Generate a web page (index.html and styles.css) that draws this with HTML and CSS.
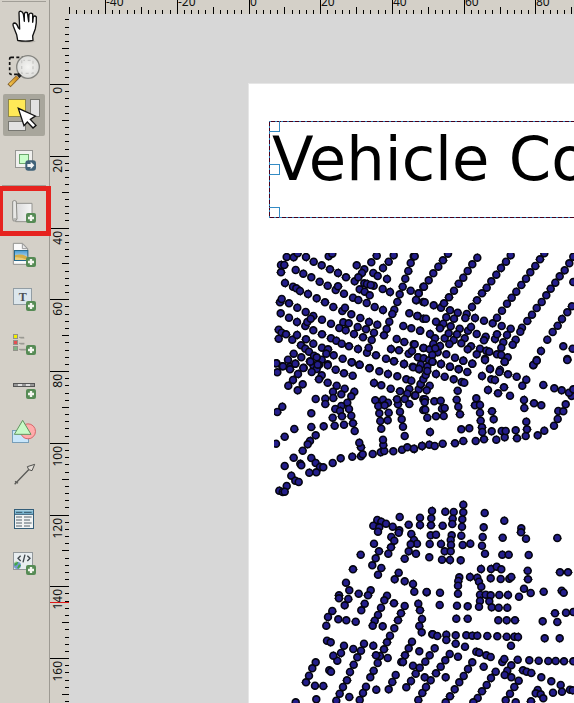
FILE: index.html
```html
<!DOCTYPE html>
<html lang="en">
<head>
<meta charset="utf-8">
<title>Print layout</title>
<link rel="stylesheet" href="styles.css">
</head>
<body>
<svg class="defs" width="0" height="0">
  <defs>
    <linearGradient id="gold"><stop offset="0" stop-color="#f5c64e"/><stop offset="1" stop-color="#c98720"/></linearGradient>
    <linearGradient id="paper"><stop offset="0" stop-color="#dadada"/><stop offset="1" stop-color="#f6f6f6"/></linearGradient>
    <radialGradient id="lens"><stop offset="0" stop-color="#f5f5f3"/><stop offset="1" stop-color="#dcdcd9"/></radialGradient>
    <linearGradient id="sky" x2="0" y2="1"><stop offset="0" stop-color="#479bd4"/><stop offset="1" stop-color="#e4f1f5"/></linearGradient>
    <g id="plus"><rect x="-15" y="-15" width="30" height="30" rx="6" fill="#568b55"/><path d="M-9 0H9M0-9V9" stroke="#f3f5ef" stroke-width="7"/></g>
  </defs>
</svg>
<main class="window">
  <nav class="toolbar">
    <div class="rule rule-top"></div>
    <div class="tool h44"><svg viewBox="0 12 147 132">
      <ellipse cx="79" cy="124" rx="28" ry="4" fill="#b7b3ab"/>
      <path d="M53 121L50 104L40 79Q37 70 43 69Q50 69 55 83L59 87L57 39Q57 33 63 34Q68 35 70 42L73 62L73 42Q75 34 82 38L86 64L87 43Q92 36 98 42L98 66L100 51Q104 45 109 51Q110 68 106 86L98 108L99 121Q77 126 53 121Z" fill="#fff" stroke="#111" stroke-width="4" stroke-linejoin="round"/>
      <path d="M73 58V66M86 58V67M98 60V68" stroke="#111" stroke-width="3"/></svg></div>
    <div class="tool h45"><svg viewBox="0 144 147 135">
      <rect x="29" y="172" width="70" height="51" rx="4" fill="none" stroke="#111" stroke-width="5" stroke-dasharray="9 7"/>
      <circle cx="84" cy="201" r="34" fill="url(#lens)" stroke="#858580" stroke-width="4"/>
      <path d="M65 181V220H99V181H70" stroke="#c9c9c7" stroke-width="4" fill="none" stroke-dasharray="9 8"/>
      <path d="M27 257L53 231" stroke="#82602c" stroke-width="13"/><path d="M29 255L53 231" stroke="url(#gold)" stroke-width="8"/><path d="M49 223L56 218L65 227L58 235Z" fill="#222"/></svg></div>
    <div class="tool h48 active"><svg viewBox="0 279 147 144">
      <rect x="25.500" y="298.500" width="51" height="51" fill="#ffe957" stroke="#8f8849" stroke-width="3"/>
      <rect x="91.500" y="298.500" width="27" height="51" fill="#e2e2e2" stroke="#777771" stroke-width="3"/>
      <rect x="25.500" y="364.500" width="51" height="27" fill="#e2e2e2" stroke="#777771" stroke-width="3"/>
      <path d="M55 325L72 377L82 366L99 384L108 376L91 358L106 348Z" fill="#fff" stroke="#111" stroke-width="4"/></svg></div>
    <div class="tool h44"><svg viewBox="0 3 147 132">
      <rect x="46.500" y="31.500" width="51" height="51" fill="#f0f0ee" stroke="#969693" stroke-width="3"/>
      <rect x="58.500" y="43.500" width="27" height="27" fill="#caffcb" stroke="#6ba66d" stroke-width="3"/>
      <rect x="76" y="61" width="32" height="31" rx="9" fill="#3f6178"/><path d="M82 72H92V65L103 76L92 88V81H82Z" fill="#f2f4f5"/></svg></div>
    <div class="rule rule-mid"></div>
    <div class="tool h49 marked"><svg viewBox="0 141 147 147">
      <path d="M47 190H96V245H47Z" fill="url(#paper)" stroke="#92928e" stroke-width="3"/>
      <path d="M38 184Q43 179 49 184L51 237Q48 245 40 243L38 236Z" fill="#e7e7e5" stroke="#8b8b86" stroke-width="3"/><path d="M40 237H49" stroke="#8b8b86" stroke-width="3"/>
      <use href="#plus" x="93" y="234"/></svg></div>
    <div class="tool h40"><svg viewBox="0 288 147 120">
      <path d="M40 310H68L83 326V373H40Z" fill="#fafafa" stroke="#92928e" stroke-width="3"/><path d="M67 311V326H82Z" fill="#e9e9e9" stroke="#999" stroke-width="3"/>
      <rect x="43.500" y="331.500" width="40" height="30" fill="url(#sky)" stroke="#28698b" stroke-width="3"/><path d="M45 346Q64 340 82 350V360H45Z" fill="#d5ae48"/><path d="M45 352Q64 350 82 360H45Z" fill="#e9cd7d"/>
      <use href="#plus" x="93" y="366"/></svg></div>
    <div class="tool h44"><svg viewBox="0 -12 147 132">
      <rect x="40.500" y="25.500" width="54" height="48" fill="#dce6ec" stroke="#929da4" stroke-width="3"/><text x="68" y="62" class="glyph-t">T</text>
      <use href="#plus" x="93" y="78"/></svg></div>
    <div class="tool h45"><svg viewBox="0 120 147 135">
      <g stroke="#92928a" stroke-width="3"><rect x="40.500" y="163.500" width="12" height="12" fill="#f2ef00"/><rect x="40.500" y="181.500" width="12" height="12" fill="#e34f53"/><rect x="40.500" y="199.500" width="12" height="12" fill="#7db783"/></g>
      <path d="M57 172H72M57 190H73M57 208H78M61 174H73M61 192H73M61 210H78" stroke="#95958e" stroke-width="3"/>
      <use href="#plus" x="93" y="210"/></svg></div>
    <div class="tool h44"><svg viewBox="0 255 147 132">
      <rect x="40.500" y="310.500" width="63" height="9" fill="#969696" stroke="#555" stroke-width="3"/><path d="M54 315H66M78 315H90" stroke="#dedede" stroke-width="6"/>
      <use href="#plus" x="93" y="342"/></svg></div>
    <div class="tool h44"><svg viewBox="0 -3 147 132">
      <rect x="37.500" y="61.500" width="48" height="36" fill="#c8e6fb" stroke="#789eb8" stroke-width="3"/><circle cx="84" cy="64" r="22.500" fill="#ffacac" stroke="#d5686c" stroke-width="3"/><path d="M68 31L93 73H43Z" fill="#c8fac7" stroke="#60945f" stroke-width="3"/></svg></div>
    <div class="tool h43"><svg viewBox="0 129 147 129">
      <path d="M44 223L88 177M50 217L45 214M50 217L54 220" fill="none" stroke="#5b5b58" stroke-width="4"/><path d="M104 163L82 170L86 179L96 182Z" fill="#e0ddd7" stroke="#50504d" stroke-width="3"/></svg></div>
    <div class="tool h44"><svg viewBox="0 258 147 132">
      <rect x="43.500" y="298.500" width="57" height="57" fill="#f1f3f3" stroke="#345d78" stroke-width="3"/><path d="M45 307H99" stroke="#83bdd7" stroke-width="12"/><path d="M45 313H99" stroke="#345d78" stroke-width="3"/><path d="M48 307H67M72 307H95" stroke="#365568" stroke-width="3"/>
      <path d="M48 321H66M72 321H95M48 330H66M72 330H90M48 339H66M72 339H95M48 348H66M72 348H90" stroke="#52606a" stroke-width="3"/></svg></div>
    <div class="tool h46"><svg viewBox="0 390 147 138">
      <rect x="40.500" y="427.500" width="57" height="51" fill="#e8edf0" stroke="#92989b" stroke-width="3"/><path d="M62 437L54 445L62 453M82 437L90 445L82 453M75 434L69 457" fill="none" stroke="#3e464b" stroke-width="4"/>
      <circle cx="52" cy="466" r="11" fill="#7598d0"/><path d="M43 461Q48 454 55 457L51 465L44 468ZM57 463L63 466L56 476L51 474Z" fill="#43a447"/><path d="M42 459Q46 455 51 455" stroke="#c3e1a0" stroke-width="3" fill="none"/>
      <use href="#plus" x="93" y="480"/></svg></div>
  </nav>
  <section class="view">
    <svg class="ruler-top" id="top-ruler" width="524" height="14"></svg>
    <div class="body">
      <svg class="ruler-left" id="left-ruler" width="19" height="689"></svg>
      <div class="desk">
        <div class="page">
          <div class="label-item">
            <svg class="frame" width="306" height="97"><path class="frame-base" d="M306 .5H.5V96.500H306"/><path class="frame-dash" d="M306 .5H.5V96.500H306"/><path class="handle" d="M0 10.500H10.500V0M0 43.500H10.500V53.500H0M0 86.500H10.500V97"/></svg>
            <span class="title">Vehicle Co</span>
          </div>
          <svg class="map" id="map" width="300" height="450" viewBox="274 253 300 450"></svg>
        </div>
      </div>
    </div>
  </section>
</main>
<script src="layout.js"></script>
</body>
</html>
```
FILE: styles.css
```css
body { margin: 0; overflow: hidden; background: #d4d0c8; }
.defs { position: absolute; }
.window { display: flex; width: 574px; height: 703px; overflow: hidden; }
.toolbar { width: 49px; flex: none; border-right: 1px solid #9d9a93; display: flex; flex-direction: column; }
.rule { height: 1px; margin: 0 3px 0 2px; background: #a19e97; flex: none; }
.rule-top { margin-top: 1px; margin-bottom: 2px; }
.rule-mid { margin-bottom: 1px; }
.tool { position: relative; flex: none; width: 49px; }
.tool svg { position: relative; display: block; width: 49px; height: 100%; }
.h40 { height: 40px; }
.h43 { height: 43px; }
.h44 { height: 44px; }
.h45 { height: 45px; }
.h46 { height: 46px; }
.h48 { height: 48px; }
.h49 { height: 49px; }
.active::before { content: ""; position: absolute; left: 3px; top: 1px; width: 42px; height: 42px; border-radius: 2px; background: #a8a69c; }
.marked::after { content: ""; position: absolute; box-sizing: border-box; left: -2px; top: -1px; width: 53px; height: 50px; border: 5px solid #e6231f; z-index: 2; }
.glyph-t { font: bold 36px "Liberation Serif", serif; fill: #4c5054; text-anchor: middle; }
.view { flex: 1; display: flex; flex-direction: column; min-width: 0; }
.ruler-top, .ruler-left { display: block; flex: none; background: #d4d0c8; }
.ruler-top text, .ruler-left text { font: 12px "Noto Sans", sans-serif; fill: #111; }
.tick { fill: #000; }
.cursor { fill: #e01818; }
.body { flex: 1; display: flex; }
.desk { flex: 1; background: #d7d7d7; padding: 69px 0 0 179px; }
.page { box-sizing: border-box; width: 326px; height: 620px; background: #fff; border: 1px solid #e6e6e6; border-width: 1px 0 0 1px; padding: 37px 0 0 20px; }
.label-item { position: relative; width: 305px; height: 97px; overflow: hidden; }
.frame { position: absolute; left: 0; top: 0; }
.frame path { fill: none; shape-rendering: crispEdges; }
.frame-base { stroke: #2f86bb; }
.frame-dash { stroke: #45001f; stroke-dasharray: 4 2; }
.handle { stroke: #348bc4; }
.title { display: block; padding-left: 3px; font: 60.800px/77px "DejaVu Sans", sans-serif; color: #000; white-space: nowrap; }
.map { display: block; margin: 35px 0 0 5px; }
.map circle { fill: #241e8c; stroke: #05050f; stroke-width: 1.600; }
.map .spill { fill: none; stroke: #000; stroke-width: 1; stroke-opacity: .5; shape-rendering: crispEdges; }
```
FILE: layout.js
```js
const NS = "http://www.w3.org/2000/svg";
function add(parent, tag, attrs, text) {
  const el = document.createElementNS(NS, tag);
  for (const k in attrs) el.setAttribute(k, attrs[k]);
  if (text !== undefined) el.textContent = text;
  parent.appendChild(el);
}

// Rulers: a tick every 2 mm, longer at 10 mm, full length and labelled at 20 mm.
const top_ = document.getElementById("top-ruler");
const left = document.getElementById("left-ruler");
for (let v = -50; v <= 90; v += 2) {
  const x = Math.round(198.500 + v * 3.586);
  const len = v % 20 === 0 ? 14 : v % 10 === 0 ? 7 : 4;
  add(top_, "rect", { class: "tick", x, y: 14 - len, width: 1, height: len });
  if (v % 20 === 0) add(top_, "text", { x: x + 1, y: 6 }, v);
}
for (let v = -18; v <= 172; v += 2) {
  const y = Math.round(70 + v * 3.588);
  const len = v % 20 === 0 ? 19 : v % 10 === 0 ? 7 : 4;
  add(left, "rect", { class: "tick", x: 19 - len, y, width: len, height: 1 });
}
for (let v = 0; v <= 160; v += 20) {
  const y = Math.round(70 + v * 3.588);
  const w = String(v).length * 6.860;
  add(left, "text", { transform: `translate(11.500 ${y + 3 + w}) rotate(-90)` }, v);
}
add(left, "rect", { class: "cursor", x: 0, y: 588, width: 19, height: 1 });

// Point layer, stored as map tiles: origin in page pixels, points in thirds of a pixel.
const tiles = [
[264,240,"68,51 89,52 101,40 126,51 149,65 173,76 198,88 222,99 246,112 272,124 301,130 329,137 356,147 378,156 51,75 61,75 51,97 95,90 118,101 142,112 167,125 191,137 215,150 222,139 240,161 267,173 283,180 308,189 332,201 357,210 63,129 87,140 97,145 108,153 132,162 158,175 183,187 208,201 235,213 243,203 262,223 289,234 315,246 340,254 48,187 53,177 75,190 100,203 125,216 148,228 174,239 201,251 226,264 245,271 270,282 297,292 323,300 50,220 75,233 99,246 124,258 130,246 140,236 148,271 174,283 201,295 217,302 233,311 255,319 282,327 309,338 336,346 366,356 390,364 420,372 446,380 44,269 53,278 66,283 85,299 99,285 126,298 111,316 148,311 124,326 135,335 174,323 192,328 187,341 209,346 236,356 263,367 286,374 317,384 44,296 89,341 72,359 112,352 138,364 150,347 173,359 158,352 37,370 55,379 78,381 94,371 119,383 148,376 165,375 191,373 158,387 194,49 205,41 338,47 322,67 301,88 278,76 294,99 283,112 389,46 374,65 357,84 328,99 341,108 369,117 309,132 320,135 287,148 302,155 317,166 449,49 440,69 433,93 424,116 416,140 407,163 400,186 391,209 385,222 376,245 368,267 360,286 440,152 464,160 478,140 457,181 478,186 436,220 461,228 478,236 418,258 442,265 469,272 398,297 421,306 449,313 381,327 405,331 434,341 444,333 463,352 478,324 238,247 254,250 281,261 306,268 330,278 314,323"],
[414,240,"2,49 102,41 87,61 73,80 58,100 44,121 30,140 14,160 6,180 32,187 59,196 81,203 108,211 131,218 158,222 183,234 210,242 236,250 263,258 290,266 190,53 175,73 161,93 148,113 134,131 120,152 105,172 90,190 290,46 276,65 261,84 247,104 232,124 218,143 204,160 189,181 174,201 391,40 378,58 364,78 349,97 336,116 322,135 307,155 293,173 279,191 264,212 249,233 478,50 466,70 452,91 437,109 424,128 410,146 397,166 383,186 368,204 354,224 340,243 324,263 319,275 305,299 296,314 478,126 474,199 460,217 444,237 431,257 416,276 400,299 381,333 368,360 358,376 448,319 476,326 460,357 10,228 36,236 66,245 97,232 120,236 154,234 88,251 110,259 78,265 137,266 162,272 171,261 18,272 48,282 63,295 92,295 104,280 119,300 129,283 152,295 142,310 188,282 215,290 210,301 243,297 249,283 279,285 268,307 262,323 2,313 29,324 47,328 71,337 58,312 78,318 106,312 97,343 123,353 148,362 175,371 171,319 161,328 198,326 217,332 226,335 188,343 213,356 249,343 262,345 281,352 272,366 12,352 29,355 45,361 55,345 64,325 56,365 81,372 108,380 134,387 15,386 40,380 228,386 258,390"],
[264,360,"37,10 57,19 40,37 78,28 94,11 118,24 102,42 87,60 73,77 116,73 101,91 143,36 139,5 161,14 173,46 165,58 191,16 191,68 215,29 218,77 240,40 242,86 266,47 263,7 287,14 316,25 346,34 372,42 400,49 427,58 442,62 390,4 420,12 448,22 466,28 470,14 330,69 352,76 380,86 408,94 436,87 430,101 452,107 464,88 470,73 207,95 232,103 208,114 184,116 155,117 184,132 271,95 262,109 250,128 232,138 214,147 228,153 255,147 234,169 262,167 206,173 267,190 240,194 212,197 179,199 142,201 272,213 142,160 55,140 40,156 91,207 155,226 62,230 36,251 138,243 131,253 116,272 89,293 62,318 109,311 112,316 142,294 155,309 168,321 178,322 136,338 157,337 82,347 94,362 104,366 68,378 46,392 56,396 206,309 230,295 265,290 291,289 296,283 291,262 286,248 326,282 350,277 361,273 358,255 357,239 388,274 414,269 430,262 450,267 474,258 422,228 417,200 413,178 408,155 402,133 399,118 422,117 436,132 334,121 357,119 372,128 343,138 362,136 346,160 374,158 349,183 371,181 352,206 478,118 478,150"],
[414,360,"0,266 24,258 46,254 62,258 86,251 123,250 148,243 185,243 210,238 247,239 272,232 309,235 335,228 371,226 391,212 420,197 431,177 433,153 448,154 455,133 473,108 465,98 443,91 421,85 388,75 478,88 48,216 40,173 66,169 89,168 34,149 33,118 61,124 80,122 84,146 92,144 32,127 47,77 38,91 20,72 4,106 28,58 35,45 15,27 40,33 66,42 92,50 119,58 143,66 151,68 55,5 81,12 108,20 134,28 160,36 148,2 175,11 131,92 128,119 133,140 138,163 142,208 166,205 187,115 183,136 198,135 198,158 200,182 204,202 205,216 233,214 234,154 239,178 263,213 275,213 305,211 337,185 339,208 204,48 228,27 256,36 282,43 308,50 337,59 325,77 232,58 243,60 270,82 252,100 288,107 222,90 330,120 331,144 360,130 382,136 272,5 358,15 368,2 213,0 460,0"],
[284,490,"2,5 280,90 268,107 292,95 306,101 286,112 282,125 326,110 346,121 347,81 374,104 408,83 408,105 270,161 230,194 207,238 186,278 196,301 193,327 182,346 165,316 165,325 224,311 260,301 252,316 242,341 232,361 285,184 275,205 265,226 292,234 282,254 322,141 331,152 321,172 313,191 344,128 382,132 390,150 399,161 380,163 374,184 396,191 362,206 344,248 332,268 362,274 387,282 391,305 428,307 309,317 301,331 291,353 282,375 272,392 266,407 296,409 330,340 362,348 351,370 342,391 331,415 318,437 309,457 300,478 288,498 281,519 269,542 259,562 246,590 237,609 227,630 145,363 132,381 127,407 163,388 187,391 215,395 129,452 140,457 180,467 171,489 160,512 148,497 208,477 240,461 231,482 220,502 209,524 198,546 189,571 177,591 167,611 157,632 268,467 276,496 311,504 95,517 85,535 75,557 66,577 93,587 118,588 136,541 141,545 97,628 35,637 196,621 277,599 403,341 408,361 414,387 406,408 413,427 445,433 384,455 374,475 363,496 352,516 387,527 406,484 335,555 325,576 314,598 407,533 395,551 381,573 367,592 357,516 415,609 403,630"],
[424,490,"118,44 118,67 115,88 114,110 112,137 116,165 139,161 24,63 64,65 89,66 22,85 86,86 21,106 56,107 85,102 20,136 36,134 17,162 51,162 83,136 80,150 81,165 62,184 80,184 16,202 54,209 78,210 110,211 182,69 179,112 176,141 174,167 183,191 241,92 292,115 291,127 306,146 236,143 400,144 235,194 254,194 314,195 171,237 201,237 218,230 232,238 200,265 230,267 256,266 262,261 311,242 312,268 300,296 320,309 285,320 138,261 160,263 165,275 172,290 106,262 103,273 102,287 102,311 48,308 8,306 168,314 185,314 200,316 226,315 252,315 168,333 196,334 165,350 203,352 224,353 250,353 47,345 99,347 131,349 97,386 131,386 223,391 248,391 273,391 359,305 413,302 419,308 408,247 432,247 393,370 426,368 448,366 356,394 400,396 362,445 407,445 26,433 40,438 67,434 67,450 95,436 95,461 127,436 145,437 160,437 190,438 220,439 248,440 271,440 282,441 261,467 123,470 32,475 17,496 4,515 77,492 102,500 64,511 50,530 36,550 20,571 6,591 157,485 166,488 187,496 200,501 145,517 132,537 119,558 106,577 92,598 78,619 65,637 179,530 65,562 215,545 201,564 188,585 174,604 161,624 148,637 235,516 241,507 262,526 250,542 242,555 262,562 284,572 271,591 258,611 245,631 281,509 316,511 344,512 373,513 395,513 420,514 448,514 297,541 308,545 322,549 352,562 382,574 410,585 438,599 446,601 414,605 387,608 341,600 335,610 350,613 358,625 321,634 275,637 2,562"]
];
const map = document.getElementById("map");
for (const [ox, oy, points] of tiles) {
  for (const p of points.split(" ")) {
    const [x, y] = p.split(",").map(Number);
    const cx = ox + x / 3, cy = oy + y / 3;
    const h = (x * 7 + y * 13) % 3;
    if (h < 2) add(map, "path", { class: "spill", d: h ? `M${cx - 4.600} ${cy}H${cx + 4.600}` : `M${cx} ${cy - 4.600}V${cy + 4.600}` });
    add(map, "circle", { cx: cx.toFixed(1), cy: cy.toFixed(1), r: 3.450 });
  }
}
```
